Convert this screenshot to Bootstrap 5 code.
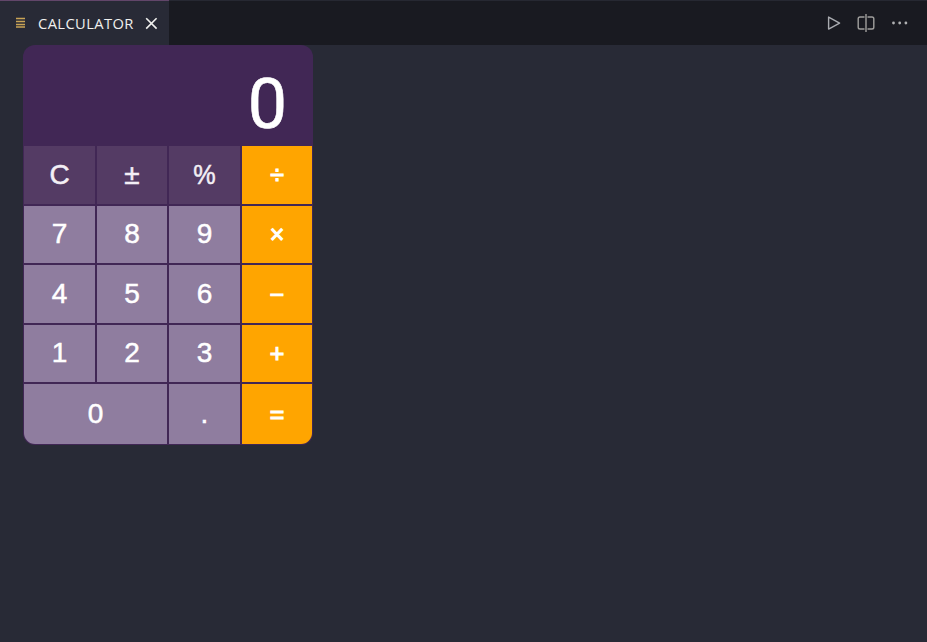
<!DOCTYPE html>
<html lang="en">
<head>
<meta charset="utf-8">
<meta name="viewport" content="width=device-width, initial-scale=1">
<title>Calculator</title>
<link href="https://cdn.jsdelivr.net/npm/bootstrap@5.3.0/dist/css/bootstrap.min.css" rel="stylesheet">
<style>
body { background: #282a36; font-family: "Liberation Sans", Arial, sans-serif; color: #fff; min-height: 642px; overflow: hidden; }
.editor-bar { height: 45px; background: #191a21; border-top: 1px solid #262832; }
.editor-tab { width: 169px; height: 45px; margin-top: -1px; padding: 0 0 0 15px; background: #282a36; border-top: 1px solid #62466a; color: #f0f0ee; font: 14.7px "Open Sans", "Noto Sans", sans-serif; }
.tab-title { margin-left: 13px; width: 95px; letter-spacing: .4px; white-space: nowrap; padding-bottom: 1px; }
.tab-close { margin-left: 12px; }
.bar-tools { padding-right: 18px; gap: 15px; }
.bar-more { margin-left: 1px; }
.calc { width: 290px; height: 400px; margin-left: 23px; padding: 0 1px 1px; background: #412755; border-radius: 12px; overflow: hidden; }
.readout { height: 101px; padding: 18px 25px 0 0; font-family: Roboto, "Liberation Sans", sans-serif; font-size: 70px; line-height: 82px; -webkit-text-stroke: .6px #fff; }
.keys { display: grid; grid-template-columns: 71px 70px 71px 70px; grid-template-rows: 58px 57px 58px 57px 60px; gap: 2px; }
.key { border: 0; padding: 0; background: #8f7d9f; color: #fff; font-size: 28px; line-height: 32px; -webkit-text-stroke: .5px currentColor; }
.key-up { padding-bottom: 2px; }
.key-fn { background: #543b64; color: #f3eff5; }
.key-op { background: #ffa500; font-size: 25px; -webkit-text-stroke-width: 1.1px; }
.percent { display: inline-block; transform: scaleX(.9); }
.key-wide { grid-column: span 2; border-bottom-left-radius: 11px; }
.key-last { border-bottom-right-radius: 11px; }
</style>
</head>
<body>
<header class="editor-bar d-flex justify-content-between">
  <div class="editor-tab d-flex align-items-center">
    <svg width="10" height="12" viewBox="0 0 10 12" stroke="#c9a456" stroke-width="1.6"><path d="M1 1.500h9M1 4.500h9M1 7.500h9M1 10h9"/></svg>
    <span class="tab-title">CALCULATOR</span>
    <svg class="tab-close" width="13" height="13" viewBox="0 0 13 13" stroke="#f0f0ee" stroke-width="1.6"><path d="M1.2 1.2l10.4 10.4M11.6 1.2L1.2 11.6"/></svg>
  </div>
  <div class="bar-tools d-flex align-items-center">
    <svg width="16" height="16" viewBox="0 0 16 16" fill="none" stroke="#a9abb0" stroke-width="1.4" stroke-linejoin="round"><path d="M2.6 2.1v12L13.6 8.1z"/></svg>
    <svg width="18" height="20" viewBox="0 0 18 20" fill="none" stroke="#a09f9d" stroke-width="1.4"><path d="M9 1v18M7.500 4H3Q1.200 4 1.200 5.800v8.400Q1.200 16 3 16h4.500M10.500 4H15q1.800 0 1.800 1.800v8.400Q16.800 16 15 16h-4.500"/></svg>
    <svg class="bar-more" width="18" height="6" viewBox="0 0 18 6" fill="#b0b1b3"><circle cx="2.500" cy="3" r="1.400"/><circle cx="8.700" cy="3" r="1.400"/><circle cx="14.900" cy="3" r="1.400"/></svg>
  </div>
</header>
<main class="calc">
  <div class="readout text-end">0</div>
  <div class="keys">
    <button class="key key-fn">C</button><button class="key key-fn">±</button><button class="key key-fn"><span class="percent">%</span></button><button class="key key-op">÷</button>
    <button class="key key-up">7</button><button class="key key-up">8</button><button class="key key-up">9</button><button class="key key-up key-op">×</button>
    <button class="key">4</button><button class="key">5</button><button class="key">6</button><button class="key key-op">−</button>
    <button class="key key-up">1</button><button class="key key-up">2</button><button class="key key-up">3</button><button class="key key-up key-op">+</button>
    <button class="key key-wide">0</button><button class="key">.</button><button class="key key-op key-last">=</button>
  </div>
</main>
<script src="https://cdn.jsdelivr.net/npm/bootstrap@5.3.0/dist/js/bootstrap.bundle.min.js"></script>
</body>
</html>
